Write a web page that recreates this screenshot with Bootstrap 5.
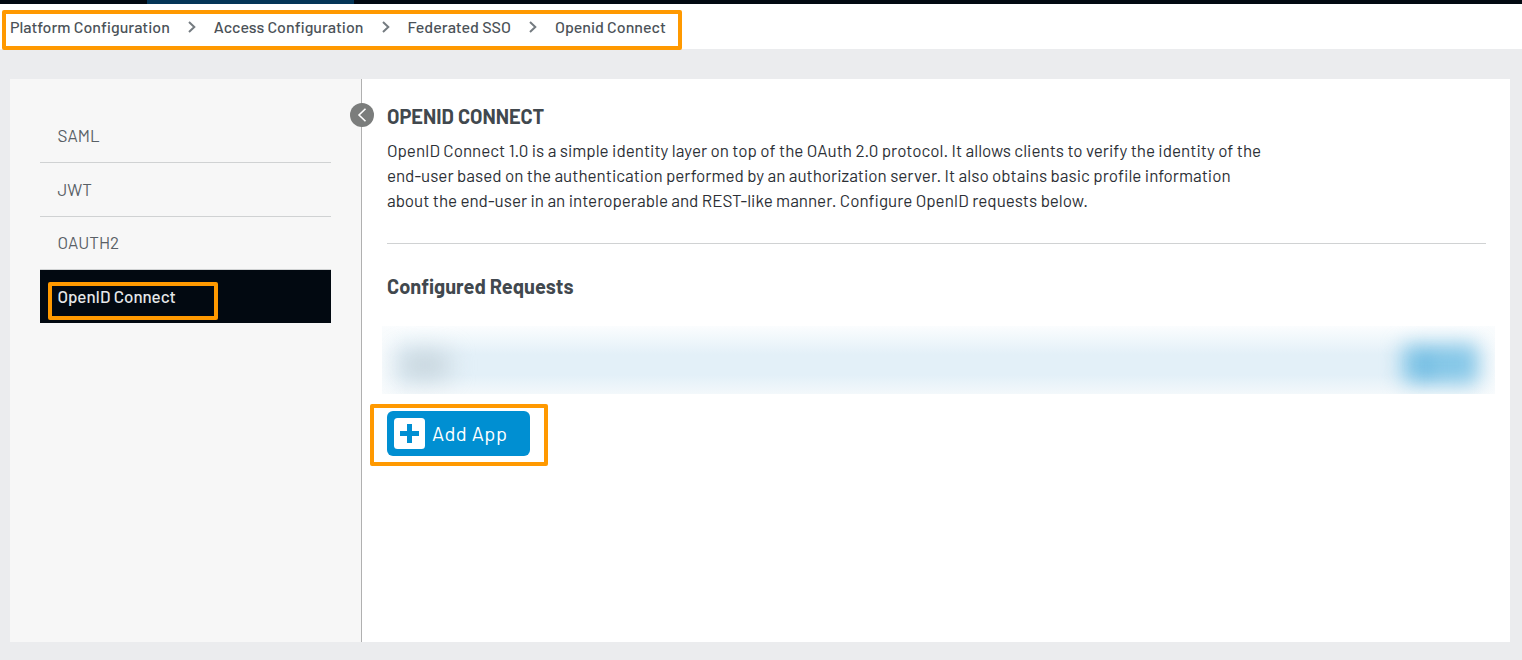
<!DOCTYPE html>
<html lang="en">
<head>
<meta charset="utf-8">
<meta name="viewport" content="width=device-width, initial-scale=1">
<title>OpenID Connect</title>
<link href="https://cdn.jsdelivr.net/npm/bootstrap@5.3.0/dist/css/bootstrap.min.css" rel="stylesheet">
<style>
  body { font-family: Barlow, Roboto, "Liberation Sans", sans-serif; background: #ebecee; color: #2c3036; height: 660px; overflow: hidden; }
  .topbar { height: 4px; background: #020911; }
  .topbar-tab { width: 207px; margin-left: 147px; background: #043557; }
  .crumbs { height: 45px; padding: 0 0 0 10px; font-size: 16px; font-weight: 500; color: #4b5258; line-height: 46px; }
  .crumbs svg { width: 8px; height: 12px; margin: 17px 18px 0 18px; }
  .outline { position: absolute; border: 4px solid #ff9900; border-radius: 2px; pointer-events: none; }
  .outline-crumbs { left: 2px; top: 6px; width: 680px; height: 40px; z-index: 2; }
  .outline-link { left: 8px; top: 12px; width: 170px; height: 38px; }
  .outline-add { left: -18px; top: -8px; width: 178px; height: 62px; }
  .panel { margin: 30px 12px 0 10px; height: 563px; }
  .side { width: 352px; background: #f7f7f7; border-right: 1px solid #b0b0b0; padding: 30px 30px 0; }
  .side a { display: block; height: 54px; padding-left: 17.5px; font-size: 17px; font-weight: 400; line-height: 53px; color: #596066; text-decoration: none; border-bottom: 1px solid #d0d2d3; }
  .side a:nth-child(3) { height: 53px; line-height: 51px; }
  .side a.current { height: 53px; background: #020911; color: #e6e8ea; font-weight: 500; border: 0; position: relative; line-height: 53px; letter-spacing: -.05px; }
  .collapse-btn { position: absolute; left: 340px; top: 24px; width: 24px; height: 24px; padding: 0; border: 0; background: none; }
  .collapse-btn svg { display: block; }
  .content-area { padding: 25px 24px 0 25px; }
  h1, h2 { font-size: 20px; font-weight: 700; color: #41484e; line-height: 25px; margin: 0; }
  .intro { font-size: 17px; font-weight: 400; line-height: 25px; margin: 9px 0 0; }
  .intro span { display: block; white-space: nowrap; }
  .rule { height: 1px; background: #d0d2d3; margin: 30px 0 30px; }
  .request-row { height: 68px; margin: 27px -9px 0 -5px; overflow: hidden; background: linear-gradient(#fbfdfe, #e3f0f8 42%, #e3f0f8 72%, #f3f8fb); position: relative; }
  .row-fade { position: absolute; inset: 0; background: linear-gradient(90deg, #fafcfdcc, #fafcfd00 24px, #fafcfd00 calc(100% - 24px), #fafcfdcc); }
  .haze { position: absolute; border-radius: 6px; }
  .haze-name { left: 19px; top: 27px; width: 48px; height: 24px; background: #c3d1d9; filter: blur(12px); }
  .haze-actions { left: 1020px; top: 19px; width: 75px; height: 38px; background: #83c6e7; filter: blur(10px); }
  .haze-action-mid { left: 1039px; top: 30px; width: 10px; height: 20px; background: #6fbae1; filter: blur(8px); }
  .add-btn { width: 143px; height: 45px; margin-top: 17px; padding: 0 0 0 6px; background: #008fd2; color: #fff; border-radius: 6px; font-size: 20px; line-height: 43px; letter-spacing: .5px; }
  .add-btn svg { margin: 5.5px 7px 0 0; }
</style>
</head>
<body>
<div class="topbar d-flex"><div class="topbar-tab"></div></div>
<nav class="crumbs bg-white d-flex align-items-start text-nowrap position-relative" aria-label="breadcrumb">
  <span>Platform Configuration</span>
  <svg viewBox="0 0 8 12"><path d="M1 1l5.300 5L1 11" fill="none" stroke="#747b80" stroke-width="2"/></svg>
  <span>Access Configuration</span>
  <svg viewBox="0 0 8 12"><path d="M1 1l5.300 5L1 11" fill="none" stroke="#747b80" stroke-width="2"/></svg>
  <span>Federated SSO</span>
  <svg viewBox="0 0 8 12"><path d="M1 1l5.300 5L1 11" fill="none" stroke="#747b80" stroke-width="2"/></svg>
  <span>Openid Connect</span>
  <div class="outline outline-crumbs"></div>
</nav>
<main class="panel bg-white d-flex position-relative">
  <aside class="side flex-shrink-0">
    <a href="#">SAML</a>
    <a href="#">JWT</a>
    <a href="#">OAUTH2</a>
    <a href="#" class="current">OpenID Connect<span class="outline outline-link"></span></a>
  </aside>
  <button class="collapse-btn" type="button" aria-label="Collapse">
    <svg width="24" height="24" viewBox="0 0 24 24"><circle cx="12" cy="12" r="12" fill="#7b7d7c"/><path d="M15.500 5.700L9 12l6.500 6.300" fill="none" stroke="#fff" stroke-width="1.600"/></svg>
  </button>
  <section class="content-area flex-grow-1">
    <h1>OPENID CONNECT</h1>
    <p class="intro">
      <span>OpenID Connect 1.0 is a simple identity layer on top of the OAuth 2.0 protocol. It allows clients to verify the identity of the</span>
      <span>end-user based on the authentication performed by an authorization server. It also obtains basic profile information</span>
      <span>about the end-user in an interoperable and REST-like manner. Configure OpenID requests below.</span>
    </p>
    <div class="rule"></div>
    <h2>Configured Requests</h2>
    <div class="request-row">
      <div class="row-fade"></div>
      <div class="haze haze-name"></div>
      <div class="haze haze-actions"></div>
      <div class="haze haze-action-mid"></div>
    </div>
    <button class="btn add-btn d-flex align-items-start position-relative text-nowrap" type="button">
      <svg width="31" height="31" viewBox="0 0 31 31"><rect width="31" height="31" rx="3.500" fill="#fff"/><path d="M13 6h5v7h7v5h-7v7h-5v-7H6v-5h7z" fill="#008fd2"/></svg>
      <span>Add App</span>
      <span class="outline outline-add"></span>
    </button>
  </section>
</main>
<script src="https://cdn.jsdelivr.net/npm/bootstrap@5.3.0/dist/js/bootstrap.bundle.min.js"></script>
</body>
</html>
